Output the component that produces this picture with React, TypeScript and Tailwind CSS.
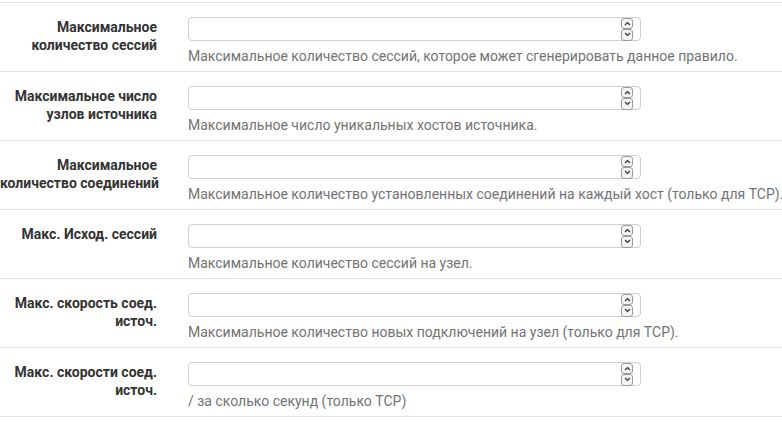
import React from "react";

interface Row {
  label: string[];
  help: string;
}

const rows: Row[] = [
  {
    label: ["Максимальное", "количество сессий"],
    help: "Максимальное количество сессий, которое может сгенерировать данное правило.",
  },
  {
    label: ["Максимальное число", "узлов источника"],
    help: "Максимальное число уникальных хостов источника.",
  },
  {
    label: ["Максимальное", "количество соединений"],
    help: "Максимальное количество установленных соединений на каждый хост (только для TCP).",
  },
  {
    label: ["Макс. Исход. сессий"],
    help: "Максимальное количество сессий на узел.",
  },
  {
    label: ["Макс. скорость соед.", "источ."],
    help: "Максимальное количество новых подключений на узел (только для TCP).",
  },
  {
    label: ["Макс. скорости соед.", "источ."],
    help: "/ за сколько секунд (только TCP)",
  },
];

const Spinner = () => (
  <div className="flex flex-col w-[12px] mr-[7px]">
    <div className="h-[11px] border border-[#9a9a9a] rounded-[3px] bg-[#f4f4f4] flex items-center justify-center">
      <svg width="7" height="5" viewBox="0 0 7 5">
        <path d="M1 4 L3.5 1.5 L6 4" fill="none" stroke="#333" strokeWidth="1.2" />
      </svg>
    </div>
    <div className="h-[12px] border border-[#9a9a9a] rounded-[3px] bg-[#f4f4f4] flex items-center justify-center">
      <svg width="7" height="5" viewBox="0 0 7 5">
        <path d="M1 1 L3.5 3.5 L6 1" fill="none" stroke="#333" strokeWidth="1.2" />
      </svg>
    </div>
  </div>
);

const FormRow: React.FC<{ row: Row }> = ({ row }) => (
  <div className="flex border-b border-[#e3e3e3] pt-[14px] pb-[6px]">
    <div className="w-[157px] shrink-0 text-right font-bold text-[14px] leading-[18px] text-[#333] pt-[1px] whitespace-nowrap">
      {row.label.map((l) => (
        <div key={l}>{l}</div>
      ))}
    </div>
    <div className="ml-[31px] flex flex-col min-w-0">
      <div className="w-[453px] h-[24px] border border-[#cfcfcf] rounded-[4px] bg-white flex items-center">
        <input className="flex-1 h-full bg-transparent outline-none px-2" />
        <Spinner />
      </div>
      <div className="mt-[6px] text-[14px] leading-[18px] text-[#737373] whitespace-nowrap">
        {row.help}
      </div>
    </div>
  </div>
);

export default function App() {
  return (
    <div
      className="w-[782px] h-[422px] bg-white overflow-hidden pt-[2px]"
      style={{ fontFamily: "Roboto, 'Noto Sans', sans-serif" }}
    >
      <div className="border-t border-[#e3e3e3]">
        {rows.map((r, i) => (
          <FormRow key={i} row={r} />
        ))}
      </div>
    </div>
  );
}
